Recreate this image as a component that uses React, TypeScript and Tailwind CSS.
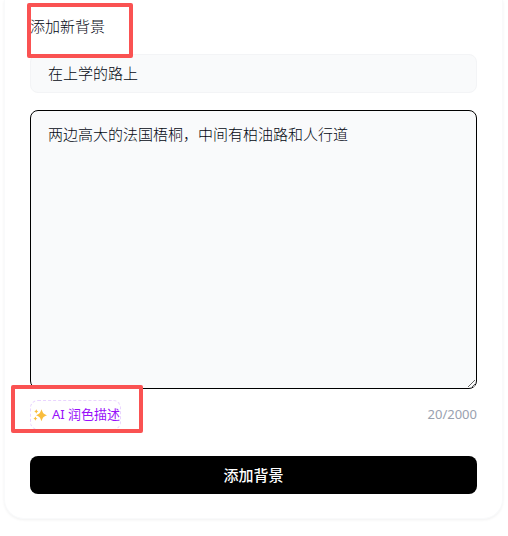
import { useState } from "react";

const MAX_LENGTH = 2000;

function Sparkles() {
  return (
    <svg
      viewBox="0 0 14 14"
      className="h-3.5 w-3.5 shrink-0"
      fill="#f9bd3c"
      aria-hidden="true"
    >
      <path d="M8.5 1.2C9.8 5 10.4 5.8 14 7.2C10.4 8.6 9.8 9.4 8.5 13.2C7.2 9.4 6.6 8.6 3 7.2C6.6 5.8 7.2 5 8.5 1.2Z" />
      <path d="M3.3 1.3C3.8 2.7 4.1 3 5.4 3.5C4.1 4 3.8 4.3 3.3 5.7C2.8 4.3 2.5 4 1.2 3.5C2.5 3 2.8 2.7 3.3 1.3Z" />
      <path d="M2.4 8.4C2.9 9.8 3.3 10.1 4.6 10.6C3.3 11.1 2.9 11.4 2.4 12.8C1.9 11.4 1.5 11.1 0.2 10.6C1.5 10.1 1.9 9.8 2.4 8.4Z" />
    </svg>
  );
}

export default function App() {
  const [name, setName] = useState("在上学的路上");
  const [description, setDescription] = useState(
    "两边高大的法国梧桐，中间有柏油路和人行道"
  );

  return (
    <main className="bg-white pr-[5px] pb-4 pl-1 font-['Noto_Sans','Noto_Sans_CJK_SC',sans-serif] text-[15px] font-light text-gray-950">
      <form
        className="rounded-b-[20px] border border-t-0 border-gray-50 bg-white px-[25px] pt-[15px] pb-6 shadow-[0_1px_3px_rgba(0,0,0,0.06)]"
        onSubmit={event => event.preventDefault()}
      >
        <div className="relative mb-[17px]">
          <h2 className="leading-[22px]">添加新背景</h2>
          <span className="pointer-events-none absolute -top-3 -left-[3px] h-[55px] w-[106px] rounded-xs border-4 border-[#fa5252]" />
        </div>

        <input
          type="text"
          aria-label="背景名称"
          value={name}
          onChange={event => setName(event.target.value)}
          className="block h-[39px] w-full rounded-lg border border-gray-100 bg-gray-50 px-[17px] pb-0.5 outline-none"
        />

        <textarea
          aria-label="背景描述"
          maxLength={MAX_LENGTH}
          value={description}
          onChange={event => setDescription(event.target.value)}
          className="mt-[17px] block h-[279px] w-full resize-y rounded-lg border border-black bg-gray-50 px-[17px] py-3 leading-[22px] outline-none"
        />

        <div className="mt-[11px] flex items-center justify-between text-[13px] font-normal">
          <div className="relative">
            <button
              type="button"
              className="flex h-[30px] items-center gap-[5px] rounded-lg border border-dashed border-purple-200 pl-0.5 text-purple-600"
            >
              <Sparkles />
              AI 润色描述
            </button>
            <span className="pointer-events-none absolute -top-[15px] -left-[19px] h-12 w-[132px] rounded-xs border-4 border-[#fa5252]" />
          </div>
          <span className="text-gray-400">
            {description.length}/{MAX_LENGTH}
          </span>
        </div>

        <button
          type="submit"
          className="mt-[26px] h-[38px] w-full rounded-lg bg-black font-medium text-white"
        >
          添加背景
        </button>
      </form>
    </main>
  );
}
